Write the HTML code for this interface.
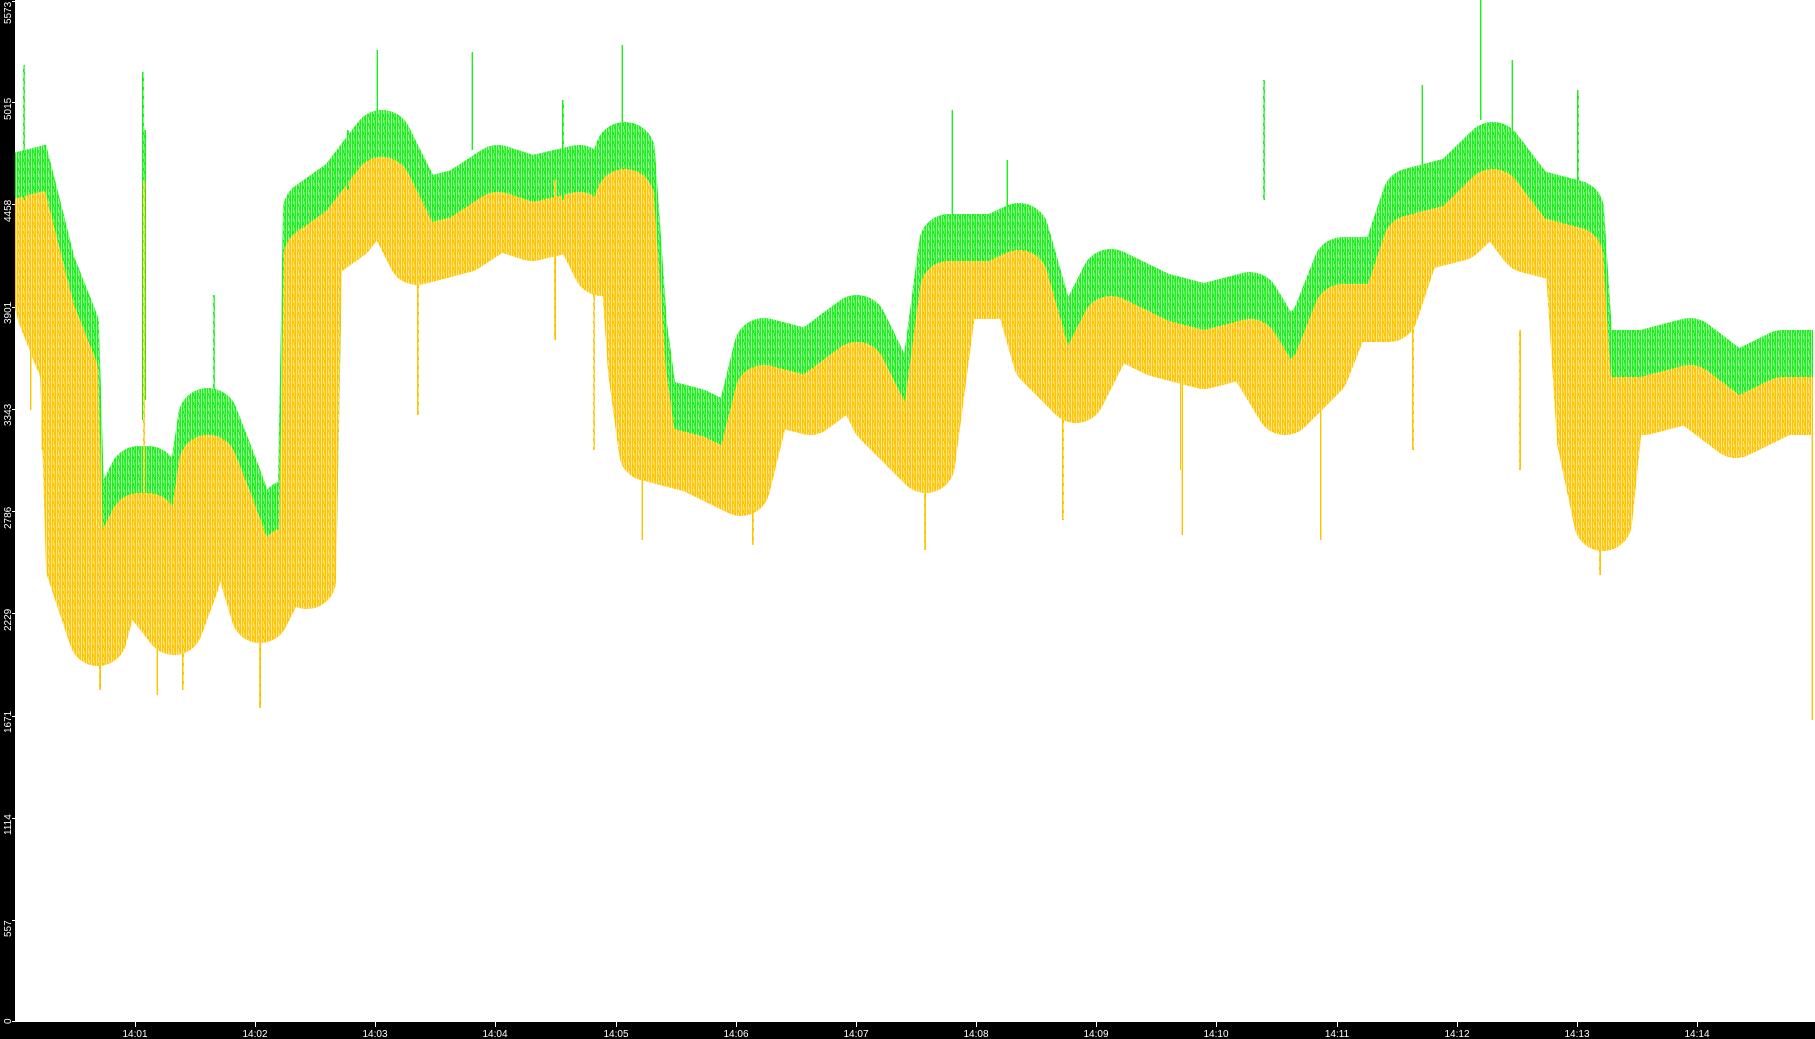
<!DOCTYPE html>
<html><head><meta charset="utf-8"><style>
html,body{margin:0;padding:0;background:#fff;width:1815px;height:1039px;overflow:hidden;font-family:"Liberation Sans",sans-serif}
svg{position:absolute;left:0;top:0}
</style></head><body>
<svg width="1815" height="1039" xmlns="http://www.w3.org/2000/svg">
<defs>
<pattern id="st" width="5" height="9" patternUnits="userSpaceOnUse">
<rect x="1" y="0" width="1" height="9" fill="#fff" opacity="0.6"/>
<rect x="3" y="0" width="1" height="6" fill="#fff" opacity="0.5"/>
<rect x="4" y="3" width="1" height="6" fill="#fff" opacity="0.3"/>
</pattern>
<clipPath id="cp"><rect x="15" y="0" width="1800" height="1022"/></clipPath>
</defs>
<g clip-path="url(#cp)">
<polyline transform="translate(0,-22)" fill="none" stroke="#1cf01c" stroke-width="60" stroke-linejoin="round" stroke-linecap="butt"
points="17,174 46,289 69,347 75,544 98,613 116,544 139,498 148,498 156,579 174,602 191,556 208,440 226,486 243,532 260,590 289,532 307,556 313,232 347,208 382,162 417,232 463,220 498,197 532,208 579,197 602,243 625,174 637,347 648,428 694,440 741,463 764,370 810,382 857,347 880,394 926,440 949,266 995,266 1019,255 1042,336 1076,370 1111,301 1158,324 1204,336 1250,324 1285,382 1320,347 1343,289 1389,289 1412,220 1458,208 1493,174 1528,220 1574,232 1586,417 1603,498 1615,382 1644,382 1690,370 1736,405 1783,382 1813,382"/>
<polyline transform="translate(0,24)" fill="none" stroke="#ffc400" stroke-width="58" stroke-linejoin="round" stroke-linecap="butt"
points="17,174 46,289 69,347 75,544 98,613 116,544 139,498 148,498 156,579 174,602 191,556 208,440 226,486 243,532 260,590 289,532 307,556 313,232 347,208 382,162 417,232 463,220 498,197 532,208 579,197 602,243 625,174 637,347 648,428 694,440 741,463 764,370 810,382 857,347 880,394 926,440 949,266 995,266 1019,255 1042,336 1076,370 1111,301 1158,324 1204,336 1250,324 1285,382 1320,347 1343,289 1389,289 1412,220 1458,208 1493,174 1528,220 1574,232 1586,417 1603,498 1615,382 1644,382 1690,370 1736,405 1783,382 1813,382"/>
<g stroke="#1cf01c" stroke-width="2">
<path d="M24 65V200M143 72V420M145 130V400M377 50V150M472 52V150M622 45V140M1481 0V120M1512 60V150M1578 90V200M1264 80V200M952 110V260M214 295V420M563 100V200M1422 85V180M348 130V190M1007 160V250"/>
</g>
<g stroke="#ffc400" stroke-width="2">
<path d="M42 260V450M157 600V695M183 580V690M260 600V708M555 180V340M418 250V415M594 290V450M642 330V540M753 420V545M925 420V550M1063 360V520M1182 350V535M1321 400V540M1520 330V470M1600 480V575M1812 380V720M1413 260V450M1181 380V470M144 180V560M31 350V410M100 640V690"/>
</g>
<rect x="15" y="0" width="1800" height="1022" fill="url(#st)"/>
</g>
<rect x="0" y="0" width="15" height="1039" fill="#000"/>
<rect x="0" y="1022" width="1815" height="17" fill="#000"/>
<g fill="#fff" font-size="10" font-family="Liberation Sans, sans-serif">
<text transform="translate(11,24) rotate(-90)">5573</text>
<text transform="translate(11,120) rotate(-90)">5015</text>
<text transform="translate(11,222) rotate(-90)">4458</text>
<text transform="translate(11,324) rotate(-90)">3901</text>
<text transform="translate(11,426) rotate(-90)">3343</text>
<text transform="translate(11,529) rotate(-90)">2786</text>
<text transform="translate(11,631) rotate(-90)">2229</text>
<text transform="translate(11,733) rotate(-90)">1671</text>
<text transform="translate(11,835) rotate(-90)">1114</text>
<text transform="translate(11,937) rotate(-90)">557</text>
<text transform="translate(11,1024) rotate(-90)">0</text>
</g>
<g stroke="#fff" stroke-width="1">
<path d="M12 1.5H15M12 102.5H15M12 204.5H15M12 307.5H15M12 409.5H15M12 511.5H15M12 613.5H15M12 716.5H15M12 818.5H15M12 920.5H15M12 1021.5H15"/>
<path d="M135.5 1022V1027M255.5 1022V1027M375.5 1022V1027M495.5 1022V1027M616.5 1022V1027M736.5 1022V1027M856.5 1022V1027M976.5 1022V1027M1096.5 1022V1027M1216.5 1022V1027M1337.5 1022V1027M1457.5 1022V1027M1577.5 1022V1027M1697.5 1022V1027"/>
</g>
<g fill="#fff" font-size="10" text-anchor="middle" font-family="Liberation Sans, sans-serif">
<text x="135" y="1037">14:01</text><text x="255" y="1037">14:02</text><text x="375" y="1037">14:03</text><text x="495" y="1037">14:04</text><text x="616" y="1037">14:05</text><text x="736" y="1037">14:06</text><text x="856" y="1037">14:07</text><text x="976" y="1037">14:08</text><text x="1096" y="1037">14:09</text><text x="1216" y="1037">14:10</text><text x="1337" y="1037">14:11</text><text x="1457" y="1037">14:12</text><text x="1577" y="1037">14:13</text><text x="1697" y="1037">14:14</text>
</g>
</svg>
</body></html>
